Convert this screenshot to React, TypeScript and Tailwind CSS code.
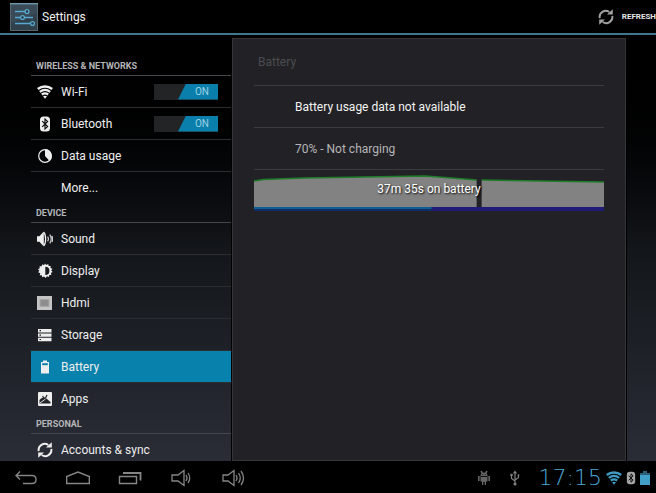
import type { ReactNode } from 'react'

interface Item {
  name: string
  icon?: ReactNode
  toggle?: boolean
  active?: boolean
}

const WifiIcon = ({ className = '' }: { className?: string }) => (
  <svg viewBox="0 0 16 14" className={className} fill="none" stroke="currentColor">
    <path d="M.8 4C5 .6 11 .6 15.200 4" strokeWidth="2.500" />
    <path d="M2.800 6.800c3.100-2.300 7.300-2.300 10.400 0M4.800 9.500c1.800-1.300 4.600-1.300 6.400 0" strokeWidth="2.200" />
    <path d="M6 11.200q2-1 4 0L8 13.700z" fill="currentColor" stroke="none" />
  </svg>
)

const BluetoothIcon = ({ className = '', mark = '#111' }: { className?: string; mark?: string }) => (
  <svg viewBox="0 0 12 16" className={className}>
    <rect x="1" y="0.500" width="10" height="15" rx="3.500" fill="currentColor" />
    <path d="M3.200 5.200l5.400 5.400L6 13V3l2.600 2.400-5.400 5.400" fill="none" stroke={mark} strokeWidth="1.200" />
  </svg>
)

const DataIcon = () => (
  <svg viewBox="0 0 16 16" className="size-4">
    <circle cx="8" cy="8" r="6.300" fill="none" stroke="currentColor" strokeWidth="1.200" />
    <path d="M8 1.200a6.800 6.800 0 0 1 4.600 11.800L8 8z" fill="currentColor" />
  </svg>
)

const SoundIcon = () => (
  <svg viewBox="0 0 16 16" className="size-4">
    <path d="M0 5.300h2.400L6.800.6v14.800L2.400 10.700H0z" fill="currentColor" />
    <path d="M6.800 1.200c2.400 2.600 2.400 11 0 13.600" fill="none" stroke="currentColor" strokeWidth="1.300" />
    <path d="M10.600 5.600q1.600 2.400 0 4.800M12.800 3.600q2.800 4.400 0 8.800M15 5q1.200 3 0 6" fill="none" stroke="currentColor" strokeWidth="1.200" opacity=".85" />
  </svg>
)

const DisplayIcon = () => (
  <svg viewBox="0 0 16 16" className="size-4">
    <path
      d="M8 .5l1.300 1.600L11.200 1l.5 2 2.100-.1-.4 2 2 .8L14.200 7.400 15.700 9l-1.900.9.6 2-2.100.1-.4 2.100-1.900-.8L8.600 15l-1.500-1.500-1.900.8-.4-2-2.100-.1.600-2L1.200 9.300 2.400 7.600.9 6.200l1.900-.9-.3-2.100 2.100.1.800-2L7 2.200z"
      fill="currentColor"
    />
    <path d="M8.300 3.800a4.100 4.100 0 0 1 0 8.200z" fill="#17191d" />
  </svg>
)

const HdmiIcon = () => (
  <svg viewBox="0 0 16 16" className="size-4">
    <rect x="0" y="1" width="15" height="14" fill="#c4c4c4" />
    <rect x="3" y="4.500" width="9" height="7" fill="#8e8e8e" stroke="#a9a9a9" />
  </svg>
)

const StorageIcon = () => (
  <svg viewBox="0 0 16 16" className="size-4">
    <path d="M1 2h13.500v3.400H1zM1 6.400h13.500v3.400H1zM1 10.800h13.500v3.400H1z" fill="currentColor" />
    <path d="M2.500 3.700h1.500M2.500 8.100h1.500M2.500 12.500h1.500" stroke="#1c1e23" strokeWidth="1.200" />
  </svg>
)

const BatteryIcon = () => (
  <svg viewBox="0 0 16 16" className="size-4">
    <path d="M4 14.500V3h2V1.500h4V3h2v11.500z" fill="currentColor" />
    <path d="M5.200 4.200h5.600v2H5.200z" fill="#0882ad" />
  </svg>
)

const AppsIcon = () => (
  <svg viewBox="0 0 16 16" className="size-4">
    <rect x="1" y="1" width="14" height="14" rx="1" fill="currentColor" />
    <path d="M2.500 12.500V9C4 6.800 6.500 6 8.500 6.800l5 4.200v1.500z" fill="#22242a" />
    <path d="M5.500 5l1.500 2M10 4L8.500 7" stroke="#22242a" strokeWidth="1.200" />
    <path d="M3 12l5.500-4" stroke="currentColor" strokeWidth=".9" />
  </svg>
)

const SyncIcon = ({ className = 'size-4' }: { className?: string }) => (
  <svg viewBox="0 0 16 16" className={className}>
    <path d="M1.700 9.200A6.200 6.200 0 0 1 11.300 3M14.300 6.800A6.200 6.200 0 0 1 4.700 13" fill="none" stroke="currentColor" strokeWidth="1.900" />
    <path d="M9 5.500h5.800V.2zM7 10.500H1.200v5.300z" fill="currentColor" />
  </svg>
)

const sections: { title: string; items: Item[] }[] = [
  {
    title: 'WIRELESS & NETWORKS',
    items: [
      { name: 'Wi-Fi', icon: <WifiIcon className="h-3.5 w-4" />, toggle: true },
      { name: 'Bluetooth', icon: <BluetoothIcon className="h-4 w-3" />, toggle: true },
      { name: 'Data usage', icon: <DataIcon /> },
      { name: 'More...' },
    ],
  },
  {
    title: 'DEVICE',
    items: [
      { name: 'Sound', icon: <SoundIcon /> },
      { name: 'Display', icon: <DisplayIcon /> },
      { name: 'Hdmi', icon: <HdmiIcon /> },
      { name: 'Storage', icon: <StorageIcon /> },
      { name: 'Battery', icon: <BatteryIcon />, active: true },
      { name: 'Apps', icon: <AppsIcon /> },
    ],
  },
  {
    title: 'PERSONAL',
    items: [{ name: 'Accounts & sync', icon: <SyncIcon /> }],
  },
]

function Toggle({ name }: { name: string }) {
  return (
    <label className="relative flex h-4 w-16 bg-[#222425]">
      <input type="checkbox" defaultChecked aria-label={name} className="absolute inset-0 size-full cursor-pointer opacity-0" />
      <span className="pointer-events-none ml-auto flex w-10 items-center justify-center bg-[#0a7fab] pl-2 text-[10px] leading-4 text-[#9fd0e4] [clip-path:polygon(8px_0,100%_0,100%_100%,0_100%)]">
        ON
      </span>
    </label>
  )
}

function Sidebar() {
  return (
    <nav className="w-[200px] shrink-0 overflow-hidden pt-[21px]">
      {sections.map((section) => (
        <section key={section.title}>
          <h2 className="h-5 border-b border-[#43464a] pl-[5px] text-[9px] leading-5 font-bold text-[#b4b5b8]">{section.title}</h2>
          <ul className="divide-y divide-[#2b2d31]">
            {section.items.map((item) => (
              <li key={item.name} className={item.active ? 'flex items-center bg-[#0882ad] pr-[13px]' : 'flex items-center pr-[13px]'}>
                <a href="#" className="flex h-[31px] flex-1 items-center gap-2 pl-1.5 text-xs text-[#eeeeee]">
                  <span className="flex w-4 justify-center">{item.icon}</span>
                  {item.name}
                </a>
                {item.toggle && <Toggle name={item.name} />}
              </li>
            ))}
          </ul>
        </section>
      ))}
    </nav>
  )
}

function BatteryChart() {
  return (
    <div className="relative h-9">
      <svg viewBox="0 0 349 36" preserveAspectRatio="none" className="size-full">
        <path d="M0 6L10 4.500 50 3 170 1 184 2 222 5V32H0zM227 5l122 2v25H227z" fill="#828282" />
        <path d="M0 6L10 4.500 50 3 170 1 184 2 222 5M227 5l122 2" fill="none" stroke="#1f7d2a" strokeWidth="1.500" />
        <path d="M0 32h349v4H0z" fill="#1f1c78" />
        <path d="M0 32h177v2H0z" fill="#0d5f92" />
        <path d="M0 34h177v2H0z" fill="#122c68" />
      </svg>
      <p className="absolute inset-x-0 top-1.5 text-center text-xs text-white [text-shadow:1px_1px_2px_#000]">37m 35s on battery</p>
    </div>
  )
}

function BatteryPanel() {
  return (
    <main className="mt-[3px] min-w-0 flex-1 border border-[#34353a] bg-[#222226] px-[21px] outline outline-black">
      <h1 className="flex h-[47px] items-center border-b border-[#3b3c40] px-1 text-xs text-[#4b4c50]">Battery</h1>
      <p className="flex h-[42px] items-center border-b border-[#3b3c40] pl-[41px] text-xs text-[#f3f3f3]">Battery usage data not available</p>
      <p className="mb-[5px] flex h-[42px] items-center border-b border-[#3b3c40] pl-[41px] text-xs text-[#b5b5b7]">70% - Not charging</p>
      <BatteryChart />
    </main>
  )
}

function SystemBar() {
  return (
    <footer className="flex h-8 shrink-0 items-center justify-between bg-black pt-0.5 pr-1.5 pl-3.5 text-[#858585]">
      <div className="flex items-center gap-7">
        <button aria-label="Back">
          <svg viewBox="0 0 24 16" className="h-4 w-6" fill="none" stroke="currentColor" strokeWidth="1.400">
            <path d="M6 1.500L2 5.500l4 4M2 5.500h16q4 0 4 4t-4 4H9" />
          </svg>
        </button>
        <button aria-label="Home">
          <svg viewBox="0 0 24 16" className="h-4 w-6" fill="none" stroke="currentColor" strokeWidth="1.400">
            <path d="M.7 13.500V6.500L12 2l11.300 4.500v7z" />
          </svg>
        </button>
        <button aria-label="Recent apps">
          <svg viewBox="0 0 24 16" className="h-4 w-6" fill="none" stroke="currentColor" strokeWidth="1.400">
            <path d="M1.500 6.500h17v7h-17z" />
            <path d="M5 3h17.500v7.500" strokeWidth="1.800" />
          </svg>
        </button>
        <button aria-label="Volume down">
          <svg viewBox="0 0 24 18" className="h-[18px] w-6" fill="none" stroke="currentColor" strokeWidth="1.300">
            <path d="M2 6h6l6-4.500v15L8 12H2zM16 6q2 3 0 6M18 4q3.500 5 0 10" />
          </svg>
        </button>
        <button aria-label="Volume up">
          <svg viewBox="0 0 24 18" className="h-[18px] w-6" fill="none" stroke="currentColor" strokeWidth="1.300">
            <path d="M1 6h5l6-4.500v15L6 12H1zM14 6q2 3 0 6M16.500 4q3.500 5 0 10M19 2q5 7 0 14" />
          </svg>
        </button>
      </div>
      <div className="flex items-center">
        <svg viewBox="0 0 14 16" className="mr-[18px] h-4 w-3.5" fill="#646464">
          <path d="M3.500 6a3.500 3.500 0 0 1 7 0v5.500H9V15H7.700v-3H6.300v3H5v-3.500H3.500z" />
          <path d="M4 1l1.500 2.500M10 1L8.500 3.500M1.800 6v5M12.200 6v5" stroke="#646464" strokeWidth="1.600" />
          <path d="M4 6.500h6M5.500 4.700h.8M7.900 4.700h.8" stroke="#111" />
        </svg>
        <svg viewBox="0 0 12 16" className="mr-[18px] h-4 w-3" fill="none" stroke="#858585" strokeWidth="1.100">
          <path d="M6 14V2M2.500 5v3.500L6 11M9.500 5v2.500L6 10M4.500 3.500L6 1.500l1.500 2M8.500 5h2" />
          <circle cx="2.500" cy="5" r=".8" />
          <circle cx="6" cy="14" r="1" fill="#858585" />
        </svg>
        <time className="mr-1 font-['DejaVu_Sans',sans-serif] text-[22px] leading-[30px] font-extralight text-[#4aa9d4]">17:15</time>
        <WifiIcon className="h-3.5 w-4 text-[#3f9cc5]" />
        <BluetoothIcon className="mx-1 h-3.5 w-2.5 text-[#a6a6a6]" />
        <svg viewBox="0 0 10 14" className="h-3.5 w-2.5">
          <path d="M0 2h3V0h4v2h3v3H0z" fill="#286078" />
          <path d="M0 4h10v10H0z" fill="#419fc8" />
        </svg>
      </div>
    </footer>
  )
}

export default function App() {
  return (
    <div className="flex h-screen flex-col overflow-hidden bg-black font-[Roboto,sans-serif]">
      <header className="flex h-[35px] shrink-0 items-center justify-between border-b-2 border-[#43758f] pl-2.5">
        <div className="flex items-center gap-1 text-xs text-[#f1f1f1]">
          <svg viewBox="0 0 28 28" className="size-7">
            <rect x=".5" y=".5" width="27" height="27" fill="#30414c" stroke="#536570" />
            <path d="M1 1h26v9L1 20z" fill="#445661" opacity=".5" />
            <path d="M0 .7h28" stroke="#6e98ad" strokeWidth="1.400" />
            <g fill="#263640" stroke="#57a9cf" strokeWidth="1.300">
              <path d="M5 8.500h10M5 14.500h5M14 14.500h9M5 20.500h15" />
              <circle cx="17" cy="8.500" r="1.900" />
              <circle cx="12.500" cy="14.500" r="1.900" />
              <circle cx="22.500" cy="20.500" r="1.900" />
            </g>
          </svg>
          Settings
        </div>
        <button className="flex items-center gap-2 text-[8px] font-bold text-[#e5e5e5]">
          <SyncIcon className="size-4 text-[#a2a2a2]" />
          REFRESH
        </button>
      </header>
      <div className="flex min-h-0 flex-1 gap-px bg-linear-to-b from-black via-[#13161a] to-[#2a2d36] pr-[30px] pl-[31px]">
        <Sidebar />
        <BatteryPanel />
      </div>
      <SystemBar />
    </div>
  )
}
